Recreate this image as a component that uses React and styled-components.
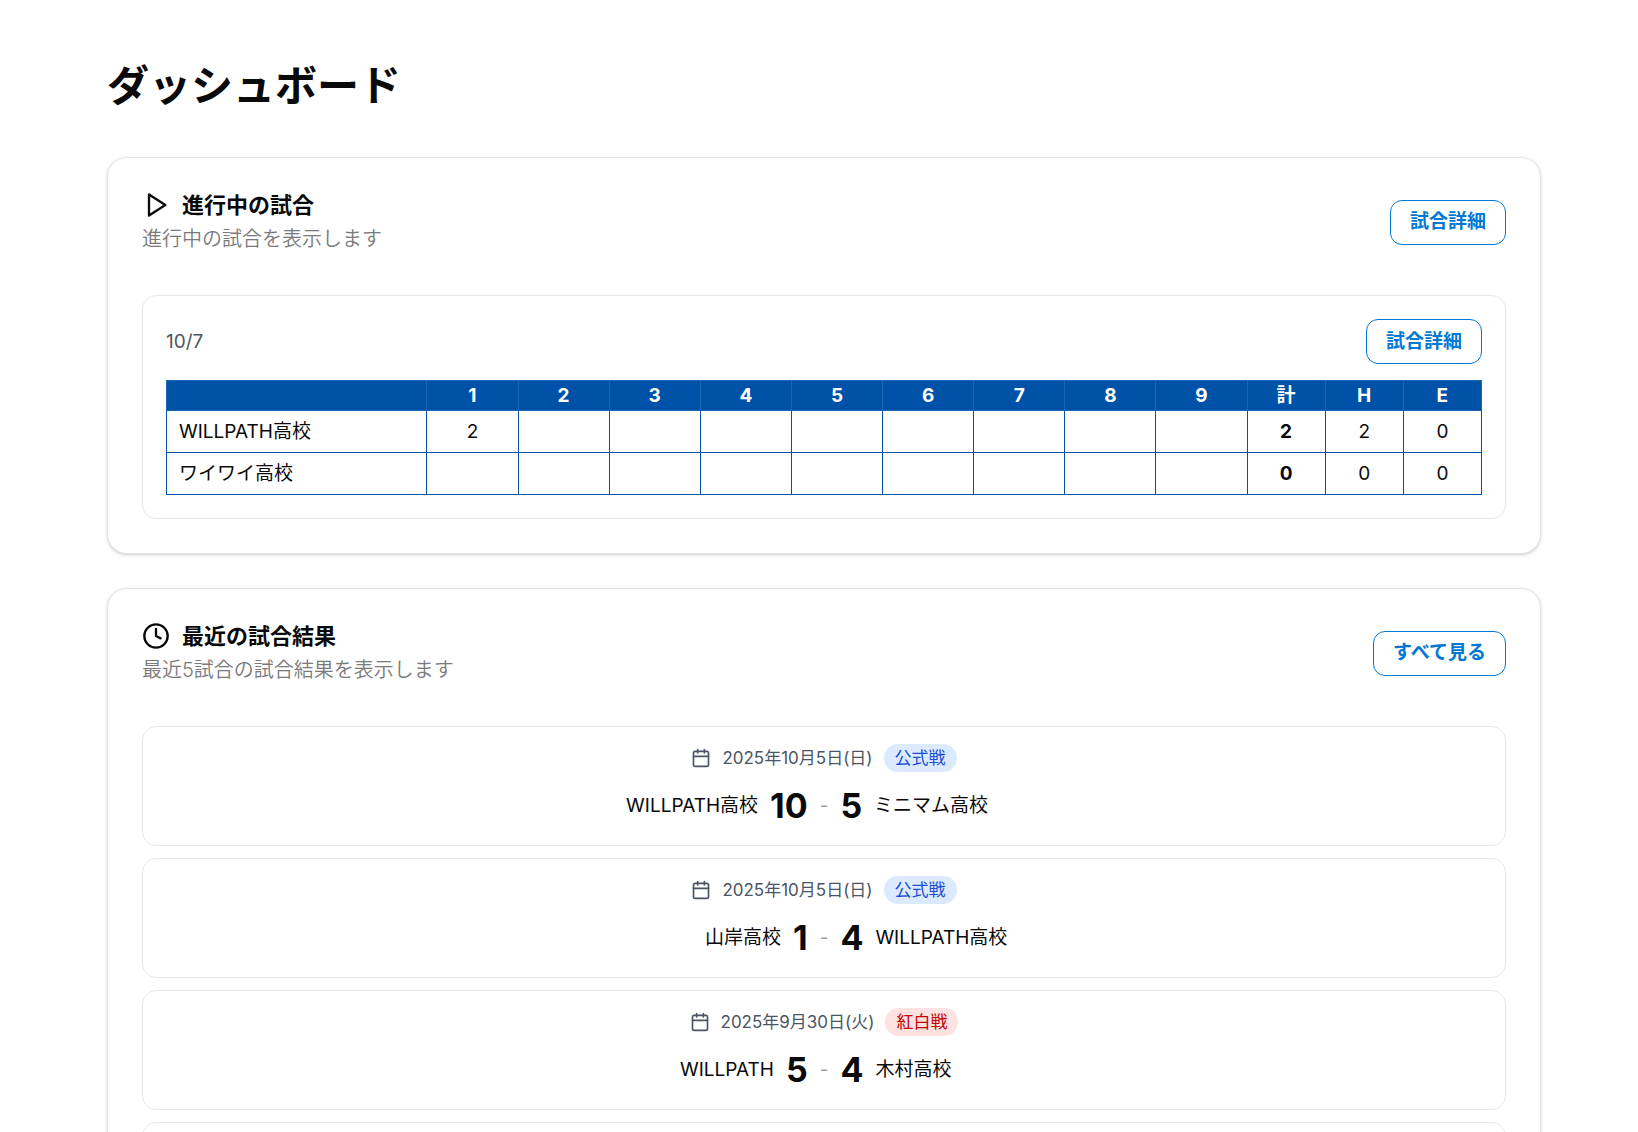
import React from "react";
import styled, { createGlobalStyle } from "styled-components";
import { Clock, Calendar } from "lucide-react";

const Global = createGlobalStyle`
  *, *::before, *::after { box-sizing: border-box; }
  html, body { margin: 0; background: #fff; }
  body {
    font-family: Inter, "Noto Sans CJK JP", sans-serif;
    color: #0a0a0a;
    font-size: 19px;
    line-height: 28px;
    font-weight: 400;
  }
`;

const Page = styled.main`
  height: 100vh;
  overflow: hidden;
  padding: 56px 97px 0 107px;
  display: flex;
  flex-direction: column;
  gap: 34px;
`;

const PageTitle = styled.h1`
  margin: 0 0 7px;
  font-size: 42px;
  line-height: 60px;
  font-weight: 700;
`;

const Card = styled.section`
  flex: none;
  border: 1px solid #e5e5e5;
  border-radius: 20px;
  background: #fff;
  padding: 33px 34px 34px;
  box-shadow: 0 1px 4px rgba(0, 0, 0, 0.1), 0 1px 2px rgba(0, 0, 0, 0.1);
`;

const CardHeader = styled.header`
  display: flex;
  justify-content: space-between;
  align-items: center;
  margin-bottom: 42px;
`;

const CardTitle = styled.h2`
  display: flex;
  align-items: center;
  gap: 12px;
  margin: 0 0 6px;
  font-size: 22px;
  line-height: 28px;
  font-weight: 700;
`;

const CardText = styled.p`
  margin: 0;
  color: #7a7a7a;
  font-size: 20px;
  font-weight: 350;
`;

const OutlineButton = styled.button`
  height: 45px;
  padding: 0 19px;
  border: 1px solid #0078d4;
  border-radius: 12px;
  background: #fff;
  color: #0078d4;
  font: inherit;
  font-weight: 600;
  cursor: pointer;
`;

const Panel = styled.div`
  border: 1px solid #e5e7eb;
  border-radius: 14px;
  padding: 23px;
`;

const PanelHeader = styled.div`
  display: flex;
  justify-content: space-between;
  align-items: center;
  margin-bottom: 16px;
`;

const GameDate = styled.time`
  color: #4b5563;
`;

const ScoreTable = styled.table`
  width: 100%;
  table-layout: fixed;
  border-collapse: collapse;
  text-align: center;
`;

const Col = styled.col`
  width: ${(p) => p.$share}%;
`;

const HeadCell = styled.th`
  height: 30px;
  padding: 0;
  background: #0052a8;
  border: 1px solid #1a66b5;
  color: #fff;
  font-weight: 700;
`;

const Cell = styled.td`
  height: 42px;
  padding: 0;
  border: 1px solid #0052a8;
  font-weight: ${(p) => (p.$strong ? 700 : 400)};
`;

const TeamCell = styled.th`
  height: 42px;
  padding: 0 12px;
  border: 1px solid #0052a8;
  text-align: left;
  font-weight: 400;
`;

const MatchList = styled.div`
  display: flex;
  flex-direction: column;
  gap: 12px;
`;

const MatchCard = styled.article`
  min-height: 120px;
  border: 1px solid #e5e7eb;
  border-radius: 14px;
  padding: 17px;
  display: flex;
  flex-direction: column;
  gap: 14px;
`;

const MatchMeta = styled.div`
  display: flex;
  justify-content: center;
  align-items: center;
  gap: 11px;
  color: #4b5563;
  font-size: 17px;
`;

const Badge = styled.span`
  padding: 0 11px;
  border-radius: 14px;
  background: ${(p) => (p.$red ? "#fee2e2" : "#dbeafe")};
  color: ${(p) => (p.$red ? "#c10007" : "#1d4ed8")};
`;

const MatchScore = styled.div`
  display: grid;
  grid-template-columns: 1fr auto 1fr;
  align-items: center;
  column-gap: 12px;
  line-height: 40px;
`;

const Side = styled.div`
  display: flex;
  align-items: center;
  justify-content: ${(p) => (p.$home ? "flex-end" : "flex-start")};
  gap: 12px;
`;

const Points = styled.strong`
  font-size: 34px;
  font-weight: 700;
`;

const Dash = styled.span`
  color: #9ca3af;
`;

const innings = [1, 2, 3, 4, 5, 6, 7, 8, 9];

const teams = [
  { name: "WILLPATH高校", runs: { 1: 2 }, total: 2, hits: 2, errors: 0 },
  { name: "ワイワイ高校", runs: {}, total: 0, hits: 0, errors: 0 },
];

const matches = [
  { date: "2025年10月5日(日)", kind: "公式戦", home: "WILLPATH高校", h: 10, a: 5, away: "ミニマム高校" },
  { date: "2025年10月5日(日)", kind: "公式戦", home: "山岸高校", h: 1, a: 4, away: "WILLPATH高校" },
  { date: "2025年9月30日(火)", kind: "紅白戦", home: "WILLPATH", h: 5, a: 4, away: "木村高校" },
];

function PlayIcon({ size }) {
  return (
    <svg
      width={size}
      height={size}
      viewBox="0 0 24 24"
      fill="none"
      stroke="currentColor"
      strokeWidth="2"
      strokeLinecap="round"
      strokeLinejoin="round"
      aria-hidden="true"
    >
      <polygon points="6 3 20 12 6 21 6 3" />
    </svg>
  );
}

function Section({ icon: Icon, title, text, action, children }) {
  return (
    <Card>
      <CardHeader>
        <div>
          <CardTitle>
            <Icon size={28} aria-hidden="true" />
            {title}
          </CardTitle>
          <CardText>{text}</CardText>
        </div>
        <OutlineButton type="button">{action}</OutlineButton>
      </CardHeader>
      {children}
    </Card>
  );
}

function Match({ match }) {
  return (
    <MatchCard>
      <MatchMeta>
        <Calendar size={20} aria-hidden="true" />
        <time>{match.date}</time>
        <Badge $red={match.kind === "紅白戦"}>{match.kind}</Badge>
      </MatchMeta>
      <MatchScore>
        <Side $home>
          <span>{match.home}</span>
          <Points>{match.h}</Points>
        </Side>
        <Dash>-</Dash>
        <Side>
          <Points>{match.a}</Points>
          <span>{match.away}</span>
        </Side>
      </MatchScore>
    </MatchCard>
  );
}

export default function App() {
  return (
    <>
      <Global />
      <Page lang="ja">
        <PageTitle>ダッシュボード</PageTitle>
        <Section icon={PlayIcon} title="進行中の試合" text="進行中の試合を表示します" action="試合詳細">
          <Panel>
            <PanelHeader>
              <GameDate>10/7</GameDate>
              <OutlineButton type="button">試合詳細</OutlineButton>
            </PanelHeader>
            <ScoreTable>
              <colgroup>
                <Col $share={20} />
                {innings.map((n) => (
                  <Col key={n} $share={7} />
                ))}
                <Col $share={6} />
                <Col $share={6} />
                <Col $share={6} />
              </colgroup>
              <thead>
                <tr>
                  <HeadCell />
                  {innings.map((n) => (
                    <HeadCell key={n} scope="col">{n}</HeadCell>
                  ))}
                  <HeadCell scope="col">計</HeadCell>
                  <HeadCell scope="col">H</HeadCell>
                  <HeadCell scope="col">E</HeadCell>
                </tr>
              </thead>
              <tbody>
                {teams.map((t) => (
                  <tr key={t.name}>
                    <TeamCell scope="row">{t.name}</TeamCell>
                    {innings.map((n) => (
                      <Cell key={n}>{t.runs[n]}</Cell>
                    ))}
                    <Cell $strong>{t.total}</Cell>
                    <Cell>{t.hits}</Cell>
                    <Cell>{t.errors}</Cell>
                  </tr>
                ))}
              </tbody>
            </ScoreTable>
          </Panel>
        </Section>
        <Section icon={Clock} title="最近の試合結果" text="最近5試合の試合結果を表示します" action="すべて見る">
          <MatchList>
            {matches.map((m, i) => (
              <Match key={i} match={m} />
            ))}
            <MatchCard />
          </MatchList>
        </Section>
      </Page>
    </>
  );
}
